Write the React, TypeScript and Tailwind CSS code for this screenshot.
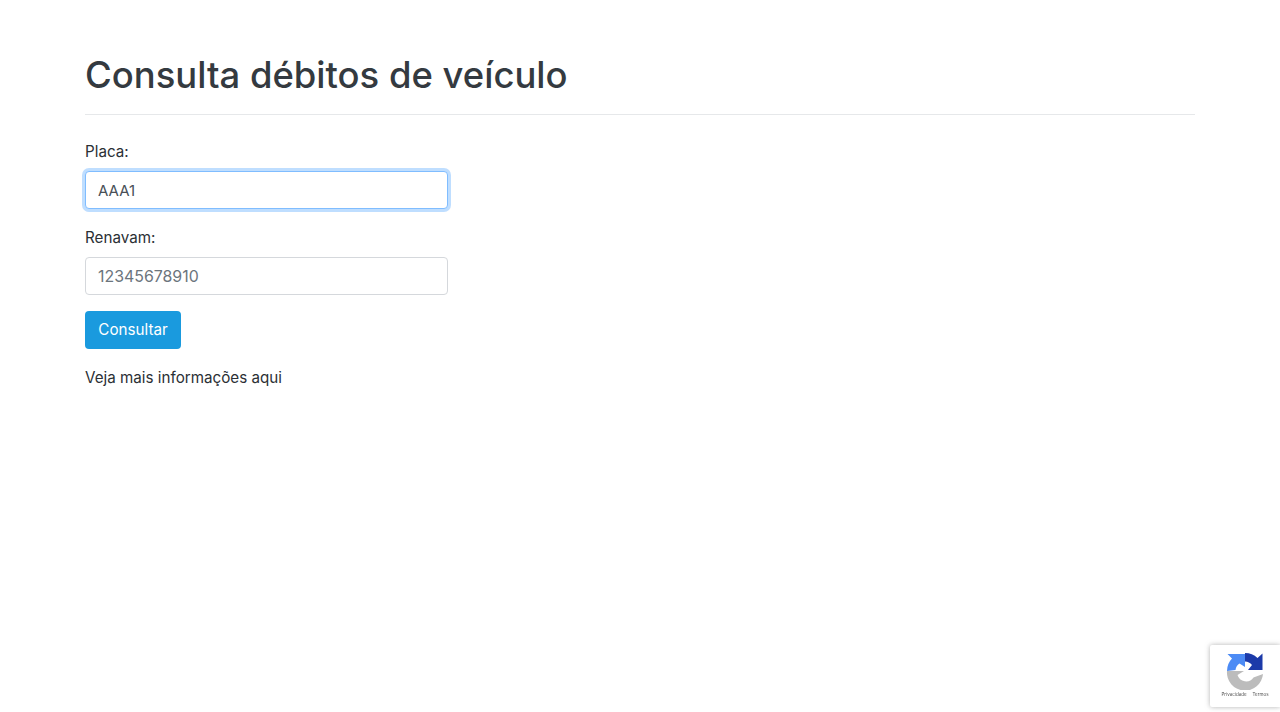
import React from 'react';

function RecaptchaBadge() {
  return (
    <div className="fixed right-0 bottom-[5px] w-[70px] h-[62px] bg-white rounded-l-[2px] shadow-[0_0_5px_rgba(128,128,128,0.6)] flex flex-col items-center pt-[7px]">
      <svg width="38" height="38" viewBox="0 0 38 38">
        {/* grey bottom arrow */}
        <path d="M1 19 H18 L11.5 23 A9 9 0 0 0 27.5 25.5 L37 22 A18 18 0 0 1 1 19 Z" fill="#bcbcbc" />
        {/* light blue top-left arrow */}
        <path d="M1 19 A18 18 0 0 1 6 6.5 L1.5 2 H19 V15 L13.5 11.5 A9 9 0 0 0 9.5 18 Z" fill="#4c8bf5" />
        {/* dark blue top-right arrow */}
        <path d="M19 1 A18 18 0 0 1 31.5 6 L36.5 1.5 V18 H22 L26 13 A9 9 0 0 0 19 9.5 Z" fill="#1c3aa9" />
      </svg>
      <div className="flex gap-[6px] text-[4.5px] leading-[7px] text-[#555] mt-px">
        <span>Privacidade</span>
        <span>Termos</span>
      </div>
    </div>
  );
}

export default function App() {
  return (
    <div className="min-h-[712px] bg-white text-[#2b3035] font-['Inter','Liberation_Sans',sans-serif]">
      <div className="w-[1140px] mx-auto px-[15px] pt-[51px]">
        <h1 className="text-[36.45px] leading-[48px] font-medium text-[#343a40] pb-[15px] border-b border-[#e6e8ea] mb-6">
          Consulta débitos de veículo
        </h1>

        <form className="w-[363px]" onSubmit={(e) => e.preventDefault()}>
          <div className="mb-4">
            <label className="block text-[15.2px] leading-6 pt-px mb-[7px]">Placa:</label>
            <input
              defaultValue="AAA1"
              className="block w-full h-[38px] px-[12px] text-[15px] text-[#495057] bg-white border border-[#80bdff] rounded-[4px] outline-none shadow-[0_0_0_3px_rgba(0,123,255,0.25)]"
            />
          </div>
          <div className="mb-4">
            <label className="block text-[15.2px] leading-6 pt-px mb-[7px]">Renavam:</label>
            <input
              placeholder="12345678910"
              className="block w-full h-[38px] px-[12px] text-[15.9px] text-[#495057] placeholder:text-[#6c757d] bg-white border border-[#d5d8dc] rounded-[4px] outline-none"
            />
          </div>
          <button className="w-[96px] h-[38px] text-[15.2px] text-white bg-[#1a9ade] rounded-[4px]">
            Consultar
          </button>
        </form>

        <p className="mt-4 pt-px text-[15.2px] leading-6">Veja mais informações aqui</p>
      </div>
      <RecaptchaBadge />
    </div>
  );
}
